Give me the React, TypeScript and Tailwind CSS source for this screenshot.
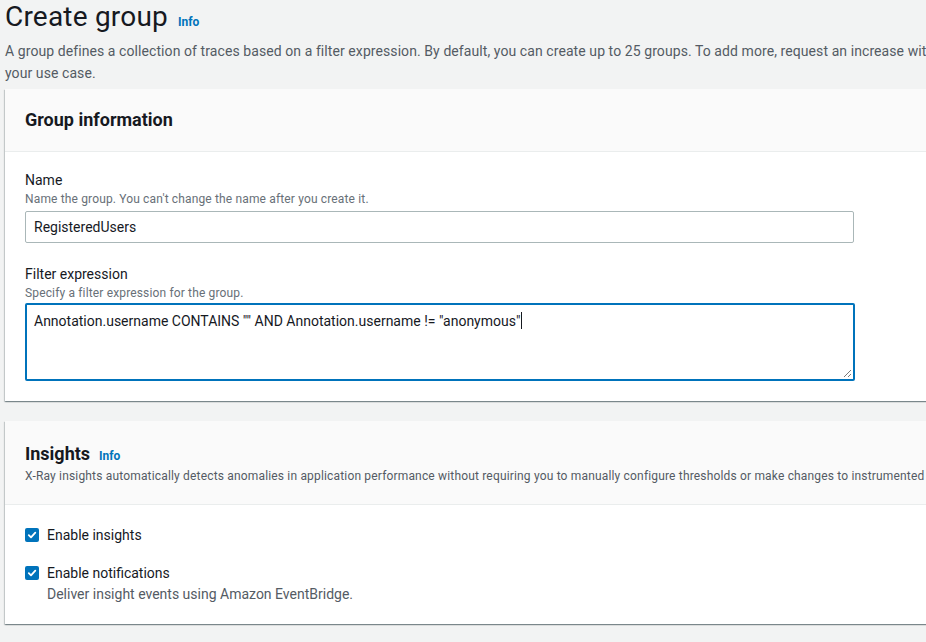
import React from "react";

const font = { fontFamily: "Roboto, 'Open Sans', Arial, sans-serif" };

function Check() {
  return (
    <span className="flex h-[14px] w-[14px] shrink-0 items-center justify-center rounded-[2px] bg-[#0073bb]">
      <svg width="10" height="10" viewBox="0 0 10 10" fill="none">
        <path d="M1.8 5.2 L4 7.4 L8.3 2.6" stroke="#fff" strokeWidth="1.8" strokeLinecap="round" strokeLinejoin="round" />
      </svg>
    </span>
  );
}

const cardShadow =
  "bg-white shadow-[0_1px_1px_0_rgba(0,28,36,0.3),1px_1px_1px_0_rgba(0,28,36,0.15),-1px_1px_1px_0_rgba(0,28,36,0.15)]";

export default function App() {
  return (
    <div className="h-[642px] w-[926px] overflow-hidden bg-[#f2f3f3] text-[#16191f]" style={font}>
      <div className="w-[1100px] pl-[5px]">
        <div className="flex items-baseline gap-[10px] pt-[0px]">
          <h1 className="text-[28px] leading-[34px] font-normal tracking-[0.2px] text-[#16191f]">Create group</h1>
          <a className="text-[12px] font-bold text-[#0073bb]">Info</a>
        </div>
        <p className="mt-[6px] text-[14px] leading-[22px] tracking-[0.08px] text-[#545b64]">
          <span className="whitespace-nowrap">
            A group defines a collection of traces based on a filter expression. By default, you can create up to 25 groups. To add more, request an increase with AWS Support for
          </span>
          <br />
          your use case.
        </p>

        <section className={`mt-[5px] ${cardShadow}`}>
          <div className="border-b border-[#eaeded] bg-[#fafafa] px-[20px] py-[20px]">
            <h2 className="text-[18px] leading-[22px] font-bold">Group information</h2>
          </div>
          <div className="px-[20px] pt-[17px] pb-[20px]">
            <div className="text-[14px] leading-[22px]">Name</div>
            <div className="text-[12px] leading-[16px] tracking-[0.15px] text-[#687078]">
              Name the group. You can't change the name after you create it.
            </div>
            <div className="mt-[4px] flex h-[32px] w-[829px] items-center rounded-[2px] border border-[#aab7b8] bg-white px-[8px] text-[14px]">
              RegisteredUsers
            </div>

            <div className="mt-[20px] text-[14px] leading-[22px]">Filter expression</div>
            <div className="text-[12px] leading-[16px] tracking-[0.15px] text-[#687078]">
              Specify a filter expression for the group.
            </div>
            <div className="relative mt-[2px] h-[78px] w-[830px] rounded-[2px] border-2 border-[#0073bb] bg-white px-[7px] pt-[4px] text-[14px] leading-[22px]">
              Annotation.username CONTAINS "" AND Annotation.username != "anonymous"
              <span className="ml-[1px] inline-block h-[17px] w-[1px] translate-y-[3px] bg-[#16191f]" />
              <svg className="absolute right-[1px] bottom-[1px]" width="9" height="9" viewBox="0 0 9 9">
                <path d="M8 1 L1 8 M8 5 L5 8" stroke="#7a7a7a" strokeWidth="1" />
              </svg>
            </div>
          </div>
        </section>

        <section className={`mt-[20px] ${cardShadow}`}>
          <div className="border-b border-[#eaeded] bg-[#fafafa] px-[20px] pt-[22px] pb-[20px]">
            <div className="flex items-baseline gap-[9px]">
              <h2 className="text-[18px] leading-[22px] font-bold">Insights</h2>
              <a className="text-[12px] font-bold text-[#0073bb]">Info</a>
            </div>
            <div className="mt-[3px] whitespace-nowrap text-[12px] leading-[16px] tracking-[0.17px] text-[#545b64]">
              X-Ray insights automatically detects anomalies in application performance without requiring you to manually configure thresholds or make changes to instrumented applications.
            </div>
          </div>
          <div className="px-[20px] pt-[19px] pb-[20px]">
            <div className="flex items-center gap-[8px] text-[14px] leading-[22px]">
              <Check />
              <span>Enable insights</span>
            </div>
            <div className="mt-[16px] flex items-center gap-[8px] text-[14px] leading-[22px]">
              <Check />
              <span>Enable notifications</span>
            </div>
            <div className="pl-[22px] text-[14px] leading-[20px] text-[#545b64]">Deliver insight events using Amazon EventBridge.</div>
          </div>
        </section>
      </div>
    </div>
  );
}
